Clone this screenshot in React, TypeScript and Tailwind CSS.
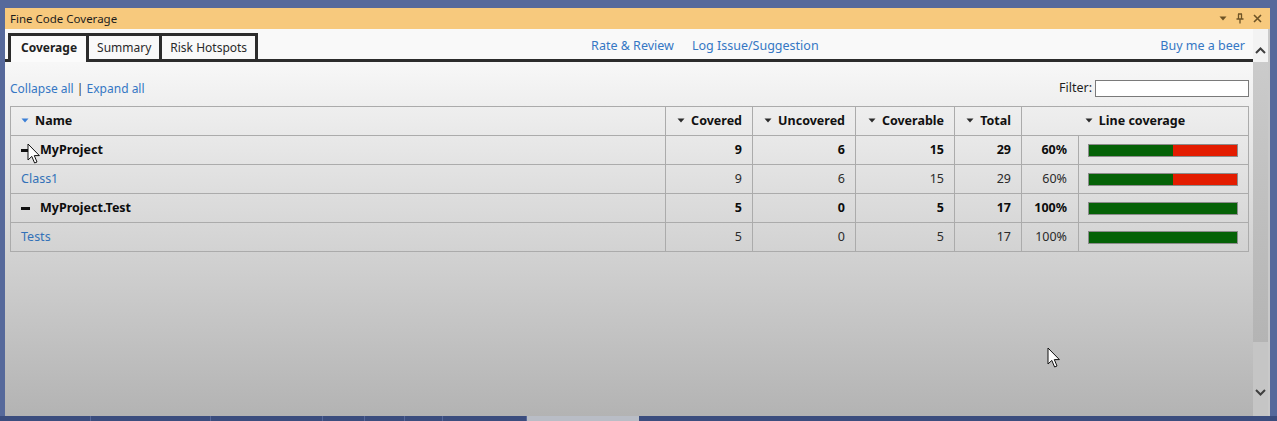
import React from 'react';

type Row = {
  name: string;
  project: boolean;
  covered: number;
  uncovered: number;
  coverable: number;
  total: number;
  pct: string;
  green: number;
};

const rows: Row[] = [
  { name: 'MyProject', project: true, covered: 9, uncovered: 6, coverable: 15, total: 29, pct: '60%', green: 57 },
  { name: 'Class1', project: false, covered: 9, uncovered: 6, coverable: 15, total: 29, pct: '60%', green: 57 },
  { name: 'MyProject.Test', project: true, covered: 5, uncovered: 0, coverable: 5, total: 17, pct: '100%', green: 100 },
  { name: 'Tests', project: false, covered: 5, uncovered: 0, coverable: 5, total: 17, pct: '100%', green: 100 },
];

const SortArrow = ({ blue = false }: { blue?: boolean }) => (
  <svg width="8" height="5" viewBox="0 0 8 5" className="inline-block mr-[6px] mb-[1px]">
    <path d="M0.5 0.5 L7.5 0.5 L4 4.5 Z" fill={blue ? '#3b7fd6' : '#2b2b2b'} />
  </svg>
);

const Cursor = ({ className }: { className: string }) => (
  <svg width="14" height="22" viewBox="0 0 14 22" className={className}>
    <path d="M1 1 L1 17 L4.8 13.4 L7.6 20 L10 19 L7.3 12.6 L12.4 12.6 Z" fill="#fff" stroke="#111" strokeWidth="1" strokeLinejoin="miter" />
  </svg>
);

const Chevron = ({ up }: { up?: boolean }) => (
  <svg width="11" height="7" viewBox="0 0 11 7">
    <path d={up ? 'M1 6 L5.5 1.5 L10 6' : 'M1 1 L5.5 5.5 L10 1'} fill="none" stroke="#3f3f3f" strokeWidth="2" />
  </svg>
);

export default function App() {
  const cell = 'border border-[#ababab] px-[10px]';
  return (
    <div className="relative w-[1277px] h-[421px] overflow-hidden bg-[#56699b] flex flex-col font-['Noto_Sans','Open_Sans',sans-serif] text-[12px] text-[#1e1e1e]">
      <div className="h-[8px] shrink-0" />
      <div className="flex-1 flex pl-[5px] pr-[7px] min-h-0">
        <div className="flex-1 flex flex-col min-w-0">
          {/* title bar */}
          <div className="h-[21px] shrink-0 bg-[#f7c97d] flex items-center pl-[5px] pr-[8px]">
            <span className="text-[11.5px] text-[#1c1c1c]">Fine Code Coverage</span>
            <div className="ml-auto flex items-center gap-[9px]">
              <svg width="8" height="5" viewBox="0 0 8 5"><path d="M0.5 0.5 L7.5 0.5 L4 4.5 Z" fill="#6d5326" /></svg>
              <svg width="8" height="11" viewBox="0 0 8 11">
                <path d="M2 1 H6 M2.5 1 V6 M5.5 1 V6 M0.5 6 H7.5 M4 6 V10.5" fill="none" stroke="#6d5326" strokeWidth="1.3" />
              </svg>
              <svg width="9" height="9" viewBox="0 0 9 9"><path d="M1 1 L8 8 M8 1 L1 8" stroke="#6d5326" strokeWidth="1.6" /></svg>
            </div>
          </div>

          <div className="flex-1 flex min-h-0">
            <div className="flex-1 flex flex-col min-w-0 bg-gradient-to-b from-[#f7f7f7] from-[9%] to-[#b3b3b3]">
              {/* tab strip */}
              <div className="h-[33px] shrink-0 bg-[#f9f9f9] flex items-end border-b-[3px] border-[#2c2c2c] pl-[3px] pr-[8px]">
                <div className="relative z-10 -mb-[3px] h-[29px] bg-[#fbfbfb] border-l-[3px] border-t-[3px] border-r-[3px] border-[#2c2c2c] pl-[10px] pr-[9px] pb-[3px] flex items-center font-bold text-[12px] text-[#222]">
                  Coverage
                </div>
                <div className="h-[26px] border-t-[3px] border-r-[3px] border-[#2c2c2c] px-[8px] flex items-center text-[12px] text-[#2a2a2a]">
                  Summary
                </div>
                <div className="h-[26px] border-t-[3px] border-r-[3px] border-[#2c2c2c] px-[8px] flex items-center text-[12px] text-[#2a2a2a]">
                  Risk Hotspots
                </div>
                <div className="h-[26px] flex items-center ml-[333px] gap-[18px] text-[12.5px] text-[#3577c4]">
                  <span>Rate &amp; Review</span>
                  <span>Log Issue/Suggestion</span>
                </div>
                <div className="h-[26px] flex items-center ml-auto text-[12.5px] text-[#3577c4]">Buy me a beer</div>
              </div>

              {/* controls */}
              <div className="flex items-center h-[19px] mt-[17px] pl-[5px] pr-[4px]">
                <span className="text-[12px] text-[#3577c4]">
                  Collapse all <span className="text-[#333]">|</span> Expand all
                </span>
                <span className="ml-auto mr-[3px] text-[12.5px] text-[#1e1e1e]">Filter:</span>
                <div className="w-[154px] h-[17px] bg-white border border-[#7a7a7a]" />
              </div>

              {/* table */}
              <div className="pl-[5px] pr-[4px] mt-[8px]">
                <table className="w-[1238px] border-collapse table-fixed text-[12.5px]">
                  <colgroup>
                    <col className="w-[655px]" />
                    <col className="w-[87px]" />
                    <col className="w-[103px]" />
                    <col className="w-[99px]" />
                    <col className="w-[67px]" />
                    <col className="w-[57px]" />
                    <col className="w-[170px]" />
                  </colgroup>
                  <thead>
                    <tr className="h-[29px] font-bold text-[#111]">
                      <th className={`${cell} text-left`}><SortArrow blue />Name</th>
                      <th className={`${cell} text-right`}><SortArrow />Covered</th>
                      <th className={`${cell} text-right`}><SortArrow />Uncovered</th>
                      <th className={`${cell} text-right`}><SortArrow />Coverable</th>
                      <th className={`${cell} text-right`}><SortArrow />Total</th>
                      <th className={`${cell} text-center`} colSpan={2}><SortArrow />Line coverage</th>
                    </tr>
                  </thead>
                  <tbody>
                    {rows.map((r) => (
                      <tr key={r.name} className={`h-[29px] ${r.project ? 'font-bold text-[#0c0c0c]' : 'text-[#2a2a2a]'}`}>
                        <td className={`${cell} text-left`}>
                          {r.project ? (
                            <span className="flex items-center">
                              <span className="w-[9px] h-[3px] bg-[#111] mr-[10px]" />
                              {r.name}
                            </span>
                          ) : (
                            <span className="text-[#3271b8]">{r.name}</span>
                          )}
                        </td>
                        <td className={`${cell} text-right`}>{r.covered}</td>
                        <td className={`${cell} text-right`}>{r.uncovered}</td>
                        <td className={`${cell} text-right`}>{r.coverable}</td>
                        <td className={`${cell} text-right`}>{r.total}</td>
                        <td className={`${cell} text-right pr-[11px]`}>{r.pct}</td>
                        <td className={`${cell} pl-[9px]`}>
                          <div className="flex w-[150px] h-[13px] border border-[#8c8c8c] bg-[#e31c00]">
                            <div className="h-full bg-[#056207]" style={{ width: `${r.green}%` }} />
                          </div>
                        </td>
                      </tr>
                    ))}
                  </tbody>
                </table>
              </div>
            </div>

            {/* scrollbar */}
            <div className="w-[15px] shrink-0 flex flex-col bg-[#c5c5c5]">
              <div className="h-[33px] bg-[#f3f3f3] flex justify-center pt-[18px]">
                <Chevron up />
              </div>
              <div className="h-[280px] bg-gradient-to-b from-[#cbcbcb] to-[#b4b4b4]" />
              <div className="flex-1 flex justify-center items-end pb-[20px]">
                <Chevron />
              </div>
            </div>
            <div className="w-[2px] shrink-0 bg-[#c9c9c9]" />
          </div>
        </div>
      </div>
      {/* bottom strip */}
      <div className="h-[5px] shrink-0 flex bg-[#3b4d7e]">
        <div className="w-[5px]" />
        <div className="w-[86px] border-r border-[#56689a]" />
        <div className="w-[120px] border-r border-[#56689a]" />
        <div className="w-[112px] border-r border-[#56689a]" />
        <div className="w-[42px] border-r border-[#56689a]" />
        <div className="w-[40px] border-r border-[#56689a]" />
        <div className="w-[38px] border-r border-[#56689a]" />
        <div className="w-[84px] border-r border-[#56689a]" />
        <div className="w-[112px] bg-[#b9bdc6]" />
      </div>

      <Cursor className="absolute left-[27px] top-[143px]" />
      <Cursor className="absolute left-[1047px] top-[347px]" />
    </div>
  );
}
